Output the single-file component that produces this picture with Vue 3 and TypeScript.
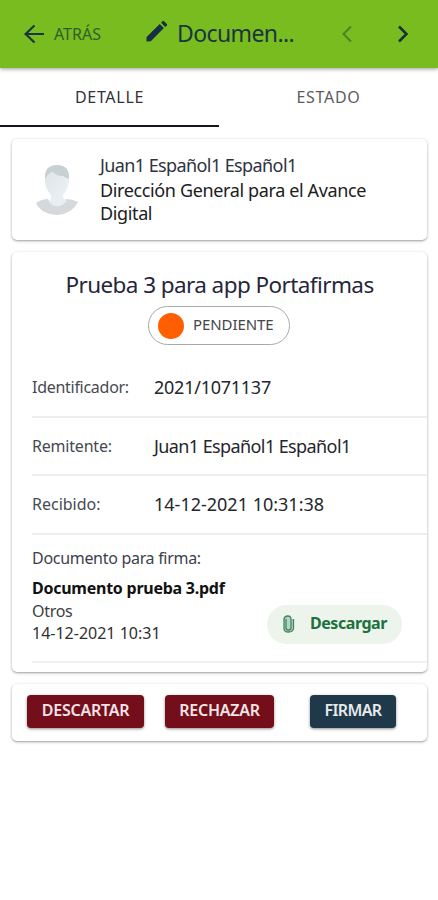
<script setup lang="ts">
interface Field {
  label: string
  value: string
  kind: string
}

const fields: Field[] = [
  { label: 'Identificador:', value: '2021/1071137', kind: 'id' },
  { label: 'Remitente:', value: 'Juan1 Español1 Español1', kind: 'sender' },
  { label: 'Recibido:', value: '14-12-2021 10:31:38', kind: 'date' },
]
</script>

<template>
  <div class="screen">
    <header class="bar">
      <button class="back">
        <svg class="arrow" viewBox="0 0 20 20"><path d="M10.5 1.5 1.5 10l9 8.500M1.500 10H20" /></svg>
        <span>ATRÁS</span>
      </button>
      <svg class="pencil" viewBox="0 0 22 22">
        <path d="M0.500 21.500 0.600 17 13.700 3.900l4.200 4.200L4.800 21.300Z" />
        <path d="m15.100 2.700 1.500-1.500q.7-.7 1.400 0l2.900 2.900q.7.7 0 1.400l-1.700 1.500Z" />
      </svg>
      <h1 class="title">Documen...</h1>
      <svg class="chev prev" viewBox="0 0 10 18"><path d="M9 1.500 1.500 9 9 16.500" /></svg>
      <svg class="chev next" viewBox="0 0 10 18"><path d="M1 1.500 8.500 9 1 16.500" /></svg>
    </header>

    <nav class="tabs">
      <button class="tab active"><span>DETALLE</span></button>
      <button class="tab"><span>ESTADO</span></button>
    </nav>

    <main class="content">
      <section class="card person">
        <svg class="avatar" viewBox="0 0 42 50">
          <defs>
            <linearGradient id="face" x1="0" y1="0" x2="1" y2="1">
              <stop offset="0" stop-color="#dce3e6" />
              <stop offset="1" stop-color="#edf2f5" />
            </linearGradient>
          </defs>
          <path d="M0 38q6-4 12-4 3 7 9 7t9-7q6 0 12 3-6 12-21 13Q5 49 0 38Z" fill="#d3d9dc" />
          <path d="M15 24h12v8q1 3 4 4-4 5-10 5t-8-5q2-1 2-4Z" fill="#e8eef1" />
          <path d="M9 13Q9 1 21 1t12 12q0 8-3 13-4 7-9 7t-9-7Q9 21 9 13Z" fill="url(#face)" />
          <path d="M9 14Q8 0 21 0q13 0 12 14-3-1-6-3-6 0-9-3-2-2-4 0-3 2-5 6Z" fill="#c8d0d3" />
        </svg>
        <div class="who">
          <p class="name">Juan1 Español1 Español1</p>
          <p class="unit">Dirección General para el Avance Digital</p>
        </div>
      </section>

      <section class="card detail">
        <h2 class="subject">Prueba 3 para app Portafirmas</h2>
        <div class="status"><i class="dot"></i><span>PENDIENTE</span></div>
        <dl class="fields">
          <div v-for="f in fields" :key="f.kind" class="field" :class="f.kind">
            <dt>{{ f.label }}</dt>
            <dd>{{ f.value }}</dd>
          </div>
        </dl>
        <div class="doc">
          <div class="doc-text">
            <p class="doc-head">Documento para firma:</p>
            <p class="doc-name">Documento prueba 3.pdf</p>
            <p class="doc-type">Otros</p>
            <p class="doc-date">14-12-2021 10:31</p>
          </div>
          <button class="download">
            <svg class="clip" viewBox="0 0 12 18">
              <path d="M3 4v9q0 2 2.500 2T8 13V4Q8 1 4.800 1T1 4v9.500Q1 17 5.500 17t5-3.500V4" />
            </svg>
            <span>Descargar</span>
          </button>
        </div>
      </section>

      <section class="card actions">
        <button class="btn discard"><span>DESCARTAR</span></button>
        <button class="btn reject"><span>RECHAZAR</span></button>
        <button class="btn sign"><span>FIRMAR</span></button>
      </section>
    </main>
  </div>
</template>

<style>
body {
  background: #fff;
}
</style>

<style scoped>
.screen {
  height: 900px;
  overflow: hidden;
  background: #fff;
  font-family: 'Noto Sans', 'Open Sans', sans-serif;
  color: #20242c;
}
.screen * {
  box-sizing: border-box;
}
p, h1, h2, dl, dd {
  margin: 0;
}
h1, h2 {
  font-weight: 400;
}
span, p, h1, h2, dt, dd {
  white-space: nowrap;
}
button {
  padding: 0;
  border: 0;
  background: none;
  font: inherit;
  color: inherit;
}
svg {
  display: block;
  flex: none;
}
.bar {
  display: flex;
  align-items: center;
  height: 68px;
  padding-left: 24px;
  background: #78bc20;
  box-shadow: 0 1px 4px rgba(0, 0, 0, 0.4);
  color: #1b3540;
}
.back {
  display: flex;
  align-items: center;
  gap: 10px;
  width: 122px;
  font-size: 16px;
  line-height: 20px;
  color: #315d2c;
}
.arrow {
  width: 20px;
  height: 20px;
  fill: none;
  stroke: #1b3442;
  stroke-width: 2.200;
}
.pencil {
  width: 22px;
  height: 22px;
  margin-top: -6px;
  fill: #182f43;
}
.title {
  width: 166px;
  margin: -2px 0 0 9px;
  font-size: 23px;
  line-height: 30px;
  letter-spacing: -0.6px;
}
.chev {
  width: 10px;
  height: 18px;
  fill: none;
  stroke-width: 2;
}
.prev {
  margin-left: -1px;
  stroke: #4d8128;
}
.next {
  margin-left: 46px;
  stroke: #182f38;
  stroke-width: 2.500;
}
.tabs {
  display: flex;
  height: 59px;
}
.tab {
  flex: 1;
  height: 59px;
  border-bottom: 2px solid transparent;
  font-size: 16px;
  letter-spacing: 0.700px;
  color: #5c5c60;
}
.tab.active {
  border-color: #15151d;
  color: #30313c;
}
.content {
  display: flex;
  flex-direction: column;
  gap: 12px;
  padding: 12px 11px 0 12px;
}
.card {
  border-radius: 5px;
  background: #fff;
  box-shadow: 0 1px 3px rgba(0, 0, 0, 0.34), 0 1px 1px rgba(0, 0, 0, 0.08);
}
.person {
  display: flex;
  height: 101px;
  padding: 14px 0 0 24px;
}
.avatar {
  width: 42px;
  height: 50px;
  margin-top: 12px;
}
.who {
  margin-left: 22px;
  font-size: 18px;
  line-height: 23px;
}
.name {
  line-height: 24px;
  letter-spacing: -0.600px;
  color: #30333d;
}
.unit {
  width: 290px;
  margin-top: 2px;
  letter-spacing: -0.370px;
  white-space: normal;
  color: #202020;
}
.detail {
  display: flex;
  flex-direction: column;
  align-items: center;
  height: 420px;
}
.subject {
  margin-top: 15px;
  font-size: 22.500px;
  line-height: 36px;
  letter-spacing: -0.580px;
  color: #25263a;
}
.status {
  display: flex;
  align-items: center;
  gap: 9px;
  width: 142px;
  height: 39px;
  margin-top: 3px;
  margin-right: 1px;
  padding: 0 0 0 9px;
  border: 1px solid #aaa;
  border-radius: 20px;
  font-size: 15px;
  letter-spacing: -0.080px;
  color: #45454a;
}
.status span {
  padding-bottom: 3px;
}
.dot {
  flex: none;
  width: 26px;
  height: 26px;
  border-radius: 50%;
  background: #ff5f00;
}
.fields {
  align-self: stretch;
  margin-top: 14px;
  padding-left: 20px;
}
.field {
  display: flex;
  align-items: center;
  height: 58.500px;
  border-bottom: 2px solid #eee;
}
.field dt {
  width: 122px;
  font-size: 16px;
  color: #464a52;
}
.field dd {
  font-size: 18px;
  color: #24262b;
}
.id dt {
  letter-spacing: -0.280px;
}
.id dd {
  letter-spacing: -0.250px;
}
.sender dt {
  letter-spacing: -0.200px;
}
.sender dd {
  letter-spacing: -0.600px;
}
.doc {
  display: flex;
  align-self: stretch;
  height: 128px;
  margin-left: 20px;
  border-bottom: 2px solid #f0f0f0;
}
.doc-text {
  width: 235px;
  padding-top: 11px;
  font-size: 16px;
  line-height: 22px;
}
.doc-head {
  line-height: 24px;
  letter-spacing: -0.300px;
  color: #3d414c;
}
.doc-name {
  margin-top: 7px;
  font-weight: 700;
  letter-spacing: -0.250px;
  color: #111;
}
.doc-type {
  margin-top: 1px;
  letter-spacing: -0.300px;
  color: #404040;
}
.doc-date {
  color: #303030;
}
.download {
  display: flex;
  align-items: center;
  width: 135px;
  height: 39px;
  margin-top: 70px;
  padding-left: 16px;
  border-radius: 20px;
  background: #edf4eb;
  font-size: 16px;
  font-weight: 700;
  letter-spacing: -0.450px;
  color: #1b7140;
}
.download span {
  padding-bottom: 2px;
}
.clip {
  width: 12px;
  height: 18px;
  margin-right: 15px;
  fill: #b9d3c2;
  stroke: #3f8560;
  stroke-width: 1.300;
}
.actions {
  display: flex;
  height: 57px;
  padding: 11px 0 0 15px;
}
.btn {
  height: 33px;
  padding-bottom: 3px;
  border-radius: 4px;
  background: #740e1b;
  box-shadow: 0 1px 3px rgba(0, 0, 0, 0.45);
  font-size: 16px;
  font-weight: 600;
  line-height: 30px;
  letter-spacing: -0.250px;
  color: #f0e4e4;
}
.discard {
  width: 117px;
}
.reject {
  width: 109px;
  margin-left: 21px;
}
.sign {
  width: 86px;
  margin-left: 36px;
  background: #20394a;
  letter-spacing: -0.600px;
  color: #e6eaec;
}
</style>
